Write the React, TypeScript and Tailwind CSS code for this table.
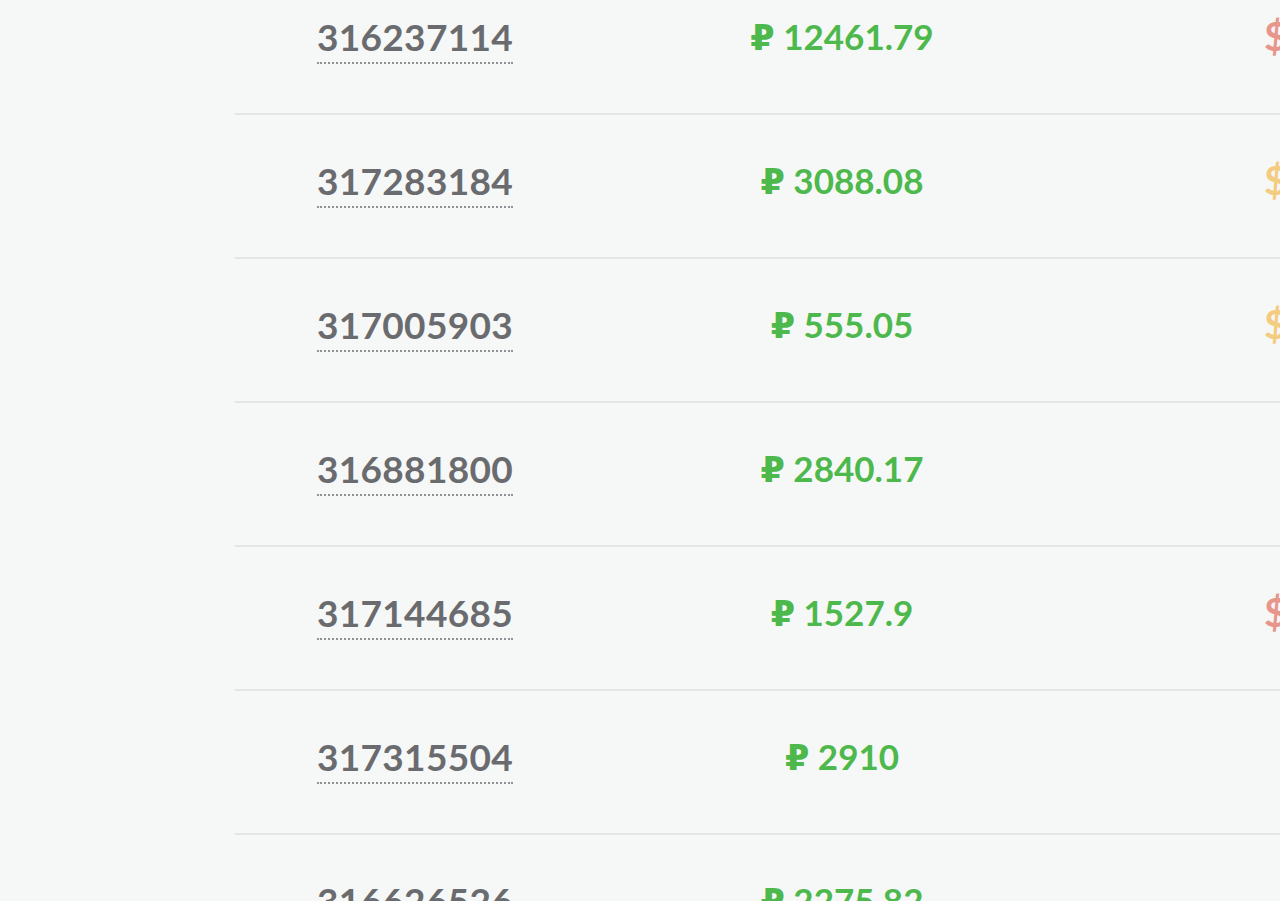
import type React from "react";

type Row = {
  id: string;
  amount: string;
  mark: "red" | "yellow" | null;
};

const rows: Row[] = [
  { id: "316237114", amount: "12461.79", mark: "red" },
  { id: "317283184", amount: "3088.08", mark: "yellow" },
  { id: "317005903", amount: "555.05", mark: "yellow" },
  { id: "316881800", amount: "2840.17", mark: null },
  { id: "317144685", amount: "1527.9", mark: "red" },
  { id: "317315504", amount: "2910", mark: null },
  { id: "316626526", amount: "2275.82", mark: null },
];

const App: React.FC = () => {
  return (
    <div
      className="h-[901px] w-[1280px] overflow-hidden bg-[#f6f7f7]"
      style={{ fontFamily: "Lato, 'DejaVu Sans', sans-serif" }}
    >
      <div className="ml-[235px] mt-[-29px] w-[1100px]">
        {rows.map((row) => (
          <div
            key={row.id}
            className="flex h-[144px] items-center border-b-2 border-[#e4e6e6] pb-[12px]"
          >
            {/* Numéro */}
            <div className="flex w-[360px] justify-center pt-[9px]">
              <span className="border-b-2 border-dotted border-[#8f9297] pb-[7px] text-[37px] font-bold leading-none tracking-[0.3px] text-[#6a6b6e]">
                {row.id}
              </span>
            </div>

            {/* Montant */}
            <div className="flex w-[494px] justify-center">
              <span className="text-[35px] font-bold leading-none text-[#4db84c]">
                ₽ {row.amount}
              </span>
            </div>

            {/* Statut */}
            <div className="flex-1 pl-[175px]">
              {row.mark && (
                <span
                  className={
                    row.mark === "red"
                      ? "text-[40px] font-bold leading-none text-[#e8968c]"
                      : "text-[40px] font-bold leading-none text-[#f4cc80]"
                  }
                >
                  $
                </span>
              )}
            </div>
          </div>
        ))}
      </div>
    </div>
  );
};

export default App;
